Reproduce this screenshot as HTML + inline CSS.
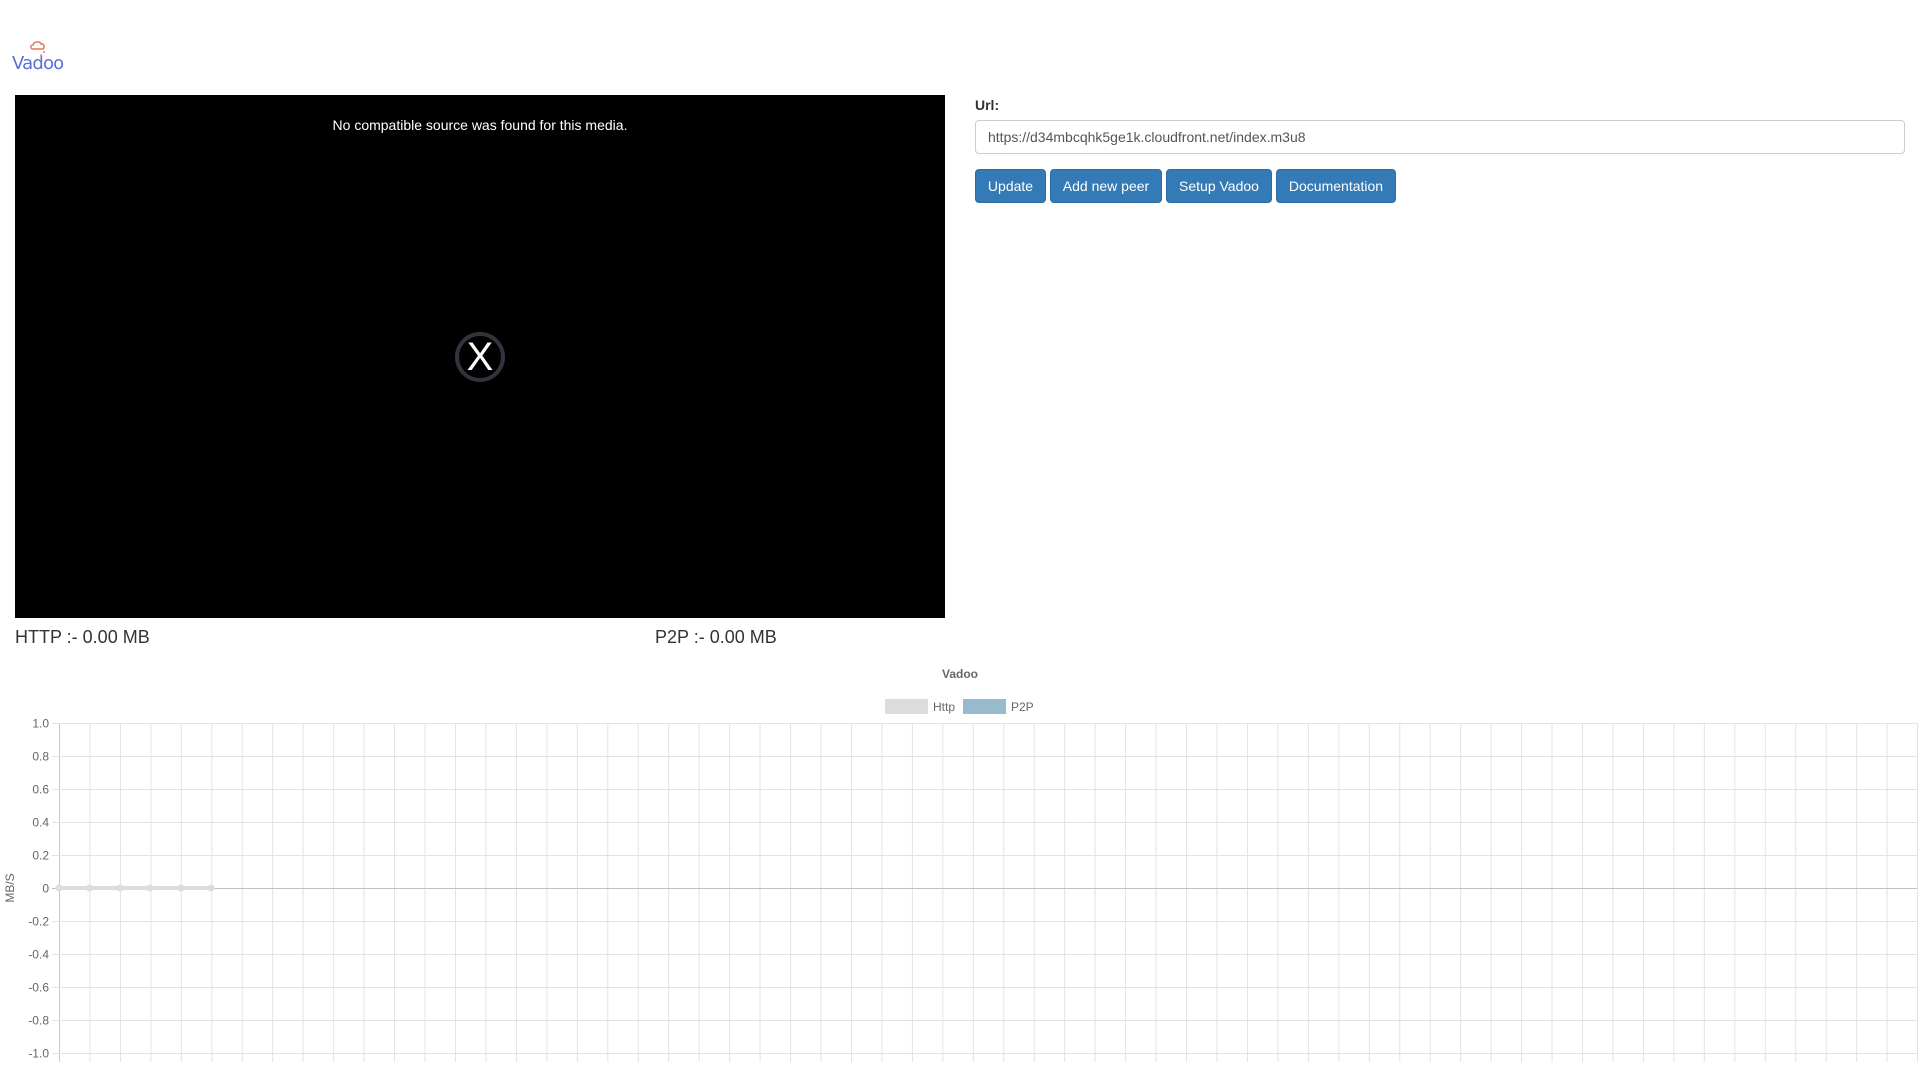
<!DOCTYPE html>
<html><head><meta charset="utf-8"><style>
body{margin:0;width:1920px;height:1080px;background:#fff;font-family:"Liberation Sans",sans-serif;position:relative;overflow:hidden;color:#333}
.abs{position:absolute}
.btn{position:absolute;top:169px;height:34px;background:#337ab7;border:1px solid #2e6da4;border-radius:4px;color:#fff;font-size:14px;line-height:32px;text-align:center;box-sizing:border-box}
</style></head><body>
<svg class="abs" style="left:29px;top:40px" width="20" height="18" viewBox="0 0 20 18"><path d="M4 9 C1 9 1 5 4 5 C5 1 11 1 12 4 C15 3 16 7 14 9 Z" fill="none" stroke="#e8775a" stroke-width="1.5"/><circle cx="15" cy="12" r="1.2" fill="#f0a090"/><circle cx="12" cy="15" r="1" fill="#f0a090"/></svg>
<div class="abs" style="left:12px;top:53px;font-size:18px;color:#5a6fd6;font-family:'DejaVu Sans',sans-serif;letter-spacing:-0.8px">Vadoo</div>

<div class="abs" style="left:15px;top:95px;width:930px;height:523px;background:#000"></div>
<div class="abs" style="left:15px;top:117px;width:930px;text-align:center;color:#fff;font-size:14px">No compatible source was found for this media.</div>
<div class="abs" style="left:455px;top:332px;width:42px;height:42px;border:4px solid #30353d;border-radius:50%;color:#fff;font-size:40px;line-height:42px;text-align:center;font-family:'Liberation Sans',sans-serif">X</div>

<div class="abs" style="left:15px;top:627px;font-size:18px">HTTP :- 0.00 MB</div>
<div class="abs" style="left:655px;top:627px;font-size:18px">P2P :- 0.00 MB</div>

<div class="abs" style="left:975px;top:97px;font-size:14px;font-weight:bold">Url:</div>
<div class="abs" style="left:975px;top:120px;width:930px;height:34px;box-sizing:border-box;border:1px solid #ccc;border-radius:4px;font-size:14px;line-height:32px;padding-left:12px;color:#555">https://d34mbcqhk5ge1k.cloudfront.net/index.m3u8</div>
<div class="btn" style="left:975px;width:71px">Update</div>
<div class="btn" style="left:1050px;width:112px">Add new peer</div>
<div class="btn" style="left:1166px;width:106px">Setup Vadoo</div>
<div class="btn" style="left:1276px;width:120px">Documentation</div>

<svg class="abs" style="left:0;top:650px" width="1920" height="430" viewBox="0 650 1920 430" font-family="Liberation Sans, sans-serif">
<text x="960" y="678" text-anchor="middle" font-size="12" font-weight="bold" fill="#666">Vadoo</text>
<rect x="885" y="699" width="43" height="15" fill="#dcdcdc"/>
<text x="933" y="711" font-size="12" fill="#666">Http</text>
<rect x="963" y="699" width="43" height="15" fill="#97bbcd"/>
<text x="1011" y="711" font-size="12" fill="#666">P2P</text>
<g id="g" stroke="#e3e3e3" stroke-width="1"></g>
<text transform="translate(14,888) rotate(-90)" text-anchor="middle" font-size="12" fill="#666">MB/S</text>
<polyline points="59,888 89.5,888 120,888 150,888 181,888 211,888" fill="none" stroke="#dcdcdc" stroke-width="4"/>
<g fill="#dcdcdc"><circle cx="59" cy="888" r="3.5"/><circle cx="89.5" cy="888" r="3.5"/><circle cx="120" cy="888" r="3.5"/><circle cx="150" cy="888" r="3.5"/><circle cx="181" cy="888" r="3.5"/><circle cx="211" cy="888" r="3.5"/></g>
</svg>
<script>
var g=document.getElementById('g'),s='';
for(var i=0;i<=61;i++){var x=59.5+i*30.46;s+='<line x1="'+x+'" y1="723" x2="'+x+'" y2="1062" stroke="'+(i==0?'#c8c8c8':'#e3e3e3')+'"/>';}
var labs=['1.0','0.8','0.6','0.4','0.2','0','-0.2','-0.4','-0.6','-0.8','-1.0'];
for(var j=0;j<=10;j++){var y=723.5+j*33;s+='<line x1="52" y1="'+y+'" x2="1917" y2="'+y+'" stroke="'+(j==5?'#c0c0c0':'#e3e3e3')+'"/>';
s+='<text x="49" y="'+(y+4)+'" text-anchor="end" font-size="12" fill="#666" stroke="none">'+labs[j]+'</text>';}
g.innerHTML=s;
</script>
</body></html>
